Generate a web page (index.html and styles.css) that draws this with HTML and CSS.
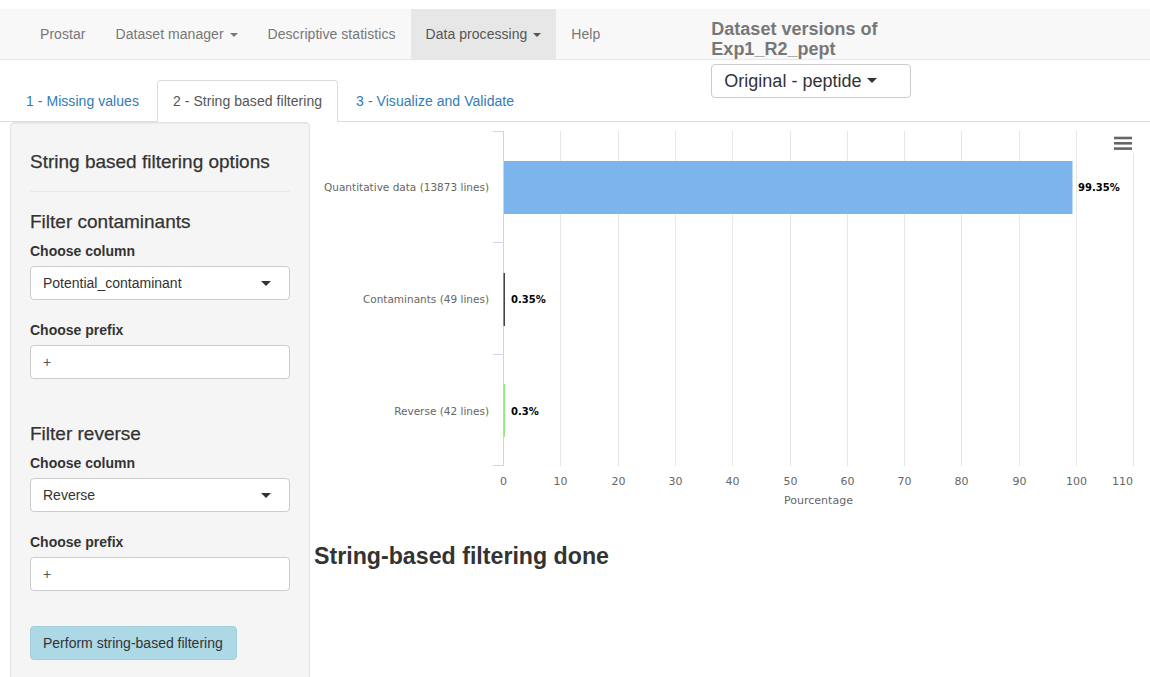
FILE: index.html
```html
<!DOCTYPE html>
<html lang="en">
<head>
<meta charset="utf-8">
<title>Prostar - String based filtering</title>
<link rel="stylesheet" href="styles.css">
</head>
<body>
<nav class="navbar">
  <ul class="nav-items">
    <li><a>Prostar</a></li>
    <li><a>Dataset manager <span class="caret"></span></a></li>
    <li><a>Descriptive statistics</a></li>
    <li class="active"><a>Data processing <span class="caret"></span></a></li>
    <li><a>Help</a></li>
  </ul>
  <div class="versions">
    <div class="versions-title">Dataset versions of<br>Exp1_R2_pept</div>
    <div class="select select-big"><span>Original - peptide</span><span class="caret-md"></span></div>
  </div>
</nav>

<ul class="tabs">
  <li><a>1 - Missing values</a></li>
  <li class="active"><a>2 - String based filtering</a></li>
  <li><a>3 - Visualize and Validate</a></li>
</ul>

<div class="content">
  <aside class="well">
    <h4 class="well-title">String based filtering options</h4>
    <hr class="divider">
    <section class="filter">
      <h4 class="filter-title">Filter contaminants</h4>
      <div class="field">
        <label class="field-label">Choose column</label>
        <div class="select"><span>Potential_contaminant</span><span class="caret-md"></span></div>
      </div>
      <div class="field">
        <label class="field-label">Choose prefix</label>
        <div class="input">+</div>
      </div>
    </section>
    <section class="filter filter-second">
      <h4 class="filter-title">Filter reverse</h4>
      <div class="field">
        <label class="field-label">Choose column</label>
        <div class="select"><span>Reverse</span><span class="caret-md"></span></div>
      </div>
      <div class="field">
        <label class="field-label">Choose prefix</label>
        <div class="input">+</div>
      </div>
    </section>
    <button class="btn-run">Perform string-based filtering</button>
  </aside>

  <main class="main">
    <svg class="chart" width="840" height="400" viewBox="0 0 840 400">
      <g class="grid" stroke="#e6e6e6" stroke-width="1">
        <line x1="250.5" y1="9" x2="250.5" y2="344"/>
        <line x1="308.5" y1="9" x2="308.5" y2="344"/>
        <line x1="365.5" y1="9" x2="365.5" y2="344"/>
        <line x1="422.5" y1="9" x2="422.5" y2="344"/>
        <line x1="480.5" y1="9" x2="480.5" y2="344"/>
        <line x1="537.5" y1="9" x2="537.5" y2="344"/>
        <line x1="594.5" y1="9" x2="594.5" y2="344"/>
        <line x1="651.5" y1="9" x2="651.5" y2="344"/>
        <line x1="709.5" y1="9" x2="709.5" y2="344"/>
        <line x1="766.5" y1="9" x2="766.5" y2="344"/>
        <line x1="823.5" y1="9" x2="823.5" y2="344"/>
      </g>
      <g stroke="#ccd6eb" stroke-width="1">
        <line x1="193.5" y1="9" x2="193.5" y2="344"/>
        <line x1="183" y1="9.5" x2="193.5" y2="9.5"/>
        <line x1="183" y1="120.5" x2="193.5" y2="120.5"/>
        <line x1="183" y1="232.5" x2="193.5" y2="232.5"/>
        <line x1="183" y1="343.5" x2="193.5" y2="343.5"/>
      </g>
      <rect x="194" y="39" width="568.5" height="53" fill="#7cb5ec"/>
      <rect x="193.5" y="151" width="1.5" height="53" fill="#434348"/>
      <rect x="193.5" y="262" width="1.5" height="53" fill="#90ed7d"/>

      <g class="cat-labels" text-anchor="end">
        <text x="179" y="69">Quantitative data (13873 lines)</text>
        <text x="179" y="181">Contaminants (49 lines)</text>
        <text x="179" y="293">Reverse (42 lines)</text>
      </g>
      <g class="data-labels">
        <text x="768" y="68.5">99.35%</text>
        <text x="201" y="180.5">0.35%</text>
        <text x="201" y="292.5">0.3%</text>
      </g>
      <g class="tick-labels" text-anchor="middle">
        <text x="193.5" y="363">0</text>
        <text x="250.5" y="363">10</text>
        <text x="308.5" y="363">20</text>
        <text x="365.5" y="363">30</text>
        <text x="422.5" y="363">40</text>
        <text x="480.5" y="363">50</text>
        <text x="537.5" y="363">60</text>
        <text x="594.5" y="363">70</text>
        <text x="651.5" y="363">80</text>
        <text x="709.5" y="363">90</text>
        <text x="766.5" y="363">100</text>
        <text x="823" y="363" text-anchor="end">110</text>
      </g>
      <text class="axis-title" x="508.5" y="382" text-anchor="middle">Pourcentage</text>

      <rect x="800" y="8" width="28" height="23" fill="#ffffff"/>
      <g stroke="#666666" stroke-width="2.6" stroke-linecap="butt">
        <line x1="804" y1="16" x2="822" y2="16"/>
        <line x1="804" y1="21.3" x2="822" y2="21.3"/>
        <line x1="804" y1="26.6" x2="822" y2="26.6"/>
      </g>
    </svg>
    <h3 class="done">String-based filtering done</h3>
  </main>
</div>
</body>
</html>
```

FILE: styles.css
```css
* { box-sizing: border-box; }

html, body {
  margin: 0;
  padding: 0;
  background: #ffffff;
}

body {
  font-family: "Liberation Sans", Arial, Helvetica, sans-serif;
  font-size: 14px;
  line-height: 20px;
  color: #333333;
  overflow: hidden;
}

/* ---------- navbar ---------- */
.navbar {
  margin-top: 9px;
  height: 51px;
  background: #f8f8f8;
  border-bottom: 1px solid #e7e7e7;
  display: flex;
  align-items: flex-start;
}

.nav-items {
  list-style: none;
  margin: 0;
  padding: 0 0 0 25px;
  display: flex;
  letter-spacing: 0.05px;
}

.nav-items a {
  display: block;
  padding: 15px 15px;
  line-height: 20px;
  color: #777777;
}

.nav-items .active a {
  background: #e7e7e7;
  color: #555555;
}

.caret {
  display: inline-block;
  width: 0;
  height: 0;
  margin-left: 2px;
  vertical-align: middle;
  border-top: 4px solid currentColor;
  border-left: 4px solid transparent;
  border-right: 4px solid transparent;
}

.versions {
  margin-left: 96px;
  padding-top: 11px;
  width: 200px;
}

.versions-title {
  font-size: 18px;
  font-weight: bold;
  line-height: 19.8px;
  color: #777777;
}

.select {
  display: flex;
  align-items: center;
  justify-content: space-between;
  height: 34px;
  padding: 0 18px 0 12px;
  background: #ffffff;
  border: 1px solid #cccccc;
  border-radius: 4px;
  color: #333333;
  font-size: 14px;
}

.select-big {
  margin-top: 4px;
  font-size: 18px;
  padding-right: 33px;
}

.caret-md {
  width: 0;
  height: 0;
  border-top: 5px solid #333333;
  border-left: 5px solid transparent;
  border-right: 5px solid transparent;
}

/* ---------- tabs ---------- */
.tabs {
  list-style: none;
  margin: 20px 0 0 0;
  padding: 0 0 0 10px;
  display: flex;
  border-bottom: 1px solid #dddddd;
  letter-spacing: 0.05px;
}

.tabs li {
  margin-bottom: -1px;
}

.tabs a {
  display: block;
  margin-right: 2px;
  padding: 10px 15px;
  line-height: 20px;
  border: 1px solid transparent;
  border-radius: 4px 4px 0 0;
  color: #337ab7;
}

.tabs .active a {
  color: #555555;
  background: #ffffff;
  border-color: #dddddd;
  border-bottom-color: transparent;
}

/* ---------- content ---------- */
.content {
  display: flex;
  padding-left: 10px;
  align-items: flex-start;
}

.well {
  flex: 0 0 300px;
  width: 300px;
  padding: 19px;
  background: #f5f5f5;
  border: 1px solid #e3e3e3;
  border-radius: 4px;
  box-shadow: inset 0 1px 1px rgba(0, 0, 0, 0.05);
}

.well-title,
.filter-title {
  margin: 0;
  font-size: 19px;
  line-height: 22px;
  font-weight: normal;
  color: #333333;
  -webkit-text-stroke: 0.25px #333333;
}

.well-title {
  margin-top: 9px;
}

.divider {
  margin: 18px 0 19px;
  border: 0;
  border-top: 1px solid #e8e8e8;
  height: 0;
}

.filter-title {
  margin-bottom: 8px;
}

.filter-second {
  margin-top: 44px;
}

.field + .field {
  margin-top: 20px;
}

.field-label {
  display: block;
  font-weight: bold;
  line-height: 20px;
  margin-bottom: 5px;
}

.input {
  height: 34px;
  padding: 0 12px;
  line-height: 32px;
  background: #ffffff;
  border: 1px solid #cccccc;
  border-radius: 4px;
  color: #555555;
}

.btn-run {
  display: block;
  margin-top: 35px;
  height: 34px;
  padding: 0 13px 0 12px;
  font-family: inherit;
  font-size: 14px;
  color: #333333;
  background: #add8e6;
  border: 1px solid #a3cfdd;
  border-radius: 4px;
}

.main {
  flex: 1;
  display: flex;
  flex-direction: column;
}

.chart {
  display: block;
  font-family: "DejaVu Sans", Verdana, sans-serif;
}

.cat-labels text {
  font-size: 10.5px;
  fill: #666666;
}

.data-labels text {
  font-size: 10px;
  font-weight: bold;
  fill: #000000;
}

.tick-labels text {
  font-size: 11px;
  fill: #666666;
}

.axis-title {
  font-size: 11px;
  fill: #666666;
}

.done {
  margin: 21px 0 0 0;
  padding-left: 4px;
  font-size: 23.2px;
  line-height: 26px;
  font-weight: bold;
  color: #333333;
}
```
